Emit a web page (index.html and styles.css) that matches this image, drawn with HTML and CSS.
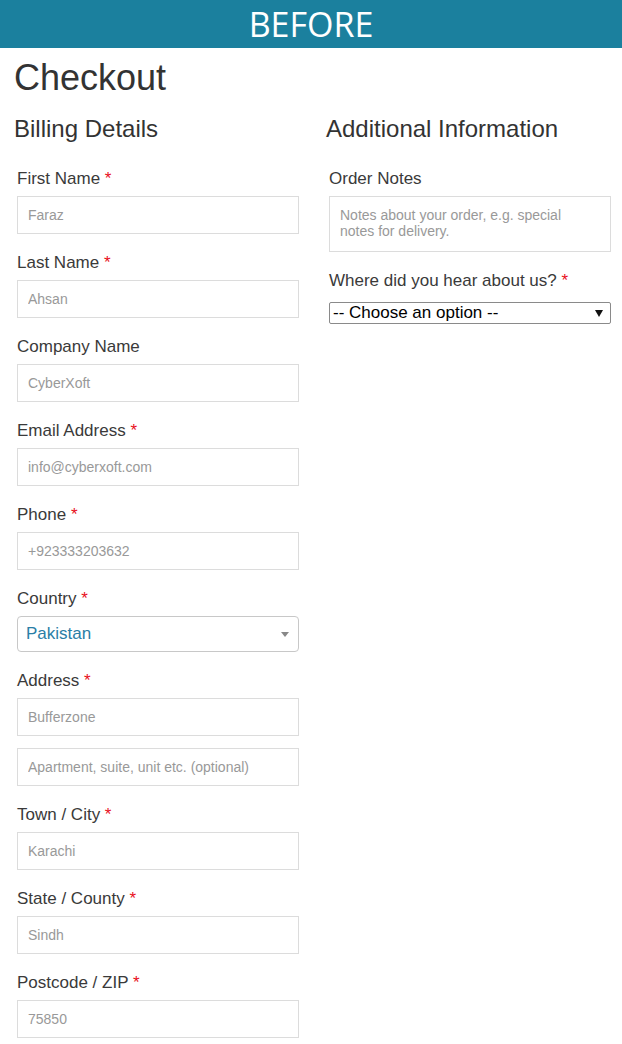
FILE: index.html
```html
<!DOCTYPE html>
<html lang="en">
<head>
    <meta charset="UTF-8">
    <meta name="viewport" content="width=device-width, initial-scale=1.0">
    <title>Checkout - Before</title>
    <link rel="stylesheet" href="styles.css">
</head>
<body>
    <div class="banner">BEFORE</div>

    <div class="page">
        <h1>Checkout</h1>

        <div class="columns">
            <div class="col">
                <h2>Billing Details</h2>

                <div class="field">
                    <label>First Name <abbr class="required">*</abbr></label>
                    <input type="text" placeholder="Faraz">
                </div>
                <div class="field">
                    <label>Last Name <abbr class="required">*</abbr></label>
                    <input type="text" placeholder="Ahsan">
                </div>
                <div class="field">
                    <label>Company Name</label>
                    <input type="text" placeholder="CyberXoft">
                </div>
                <div class="field">
                    <label>Email Address <abbr class="required">*</abbr></label>
                    <input type="email" placeholder="info@cyberxoft.com">
                </div>
                <div class="field">
                    <label>Phone <abbr class="required">*</abbr></label>
                    <input type="tel" placeholder="+923333203632">
                </div>
                <div class="field">
                    <label>Country <abbr class="required">*</abbr></label>
                    <div class="country-select">
                        <span class="country-value">Pakistan</span>
                        <span class="caret"></span>
                    </div>
                </div>
                <div class="field">
                    <label>Address <abbr class="required">*</abbr></label>
                    <input type="text" placeholder="Bufferzone">
                    <input type="text" class="second" placeholder="Apartment, suite, unit etc. (optional)">
                </div>
                <div class="field">
                    <label>Town / City <abbr class="required">*</abbr></label>
                    <input type="text" placeholder="Karachi">
                </div>
                <div class="field">
                    <label>State / County <abbr class="required">*</abbr></label>
                    <input type="text" placeholder="Sindh">
                </div>
                <div class="field">
                    <label>Postcode / ZIP <abbr class="required">*</abbr></label>
                    <input type="text" placeholder="75850">
                </div>
            </div>

            <div class="col">
                <h2>Additional Information</h2>

                <div class="field">
                    <label>Order Notes</label>
                    <textarea placeholder="Notes about your order, e.g. special notes for delivery."></textarea>
                </div>
                <div class="field">
                    <label>Where did you hear about us? <abbr class="required">*</abbr></label>
                    <div class="native-select">
                        <select>
                            <option>-- Choose an option --</option>
                        </select>
                        <svg class="select-arrow" width="8" height="7" viewBox="0 0 8 7"><path d="M0 0H8L4 7Z" fill="#111"/></svg>
                    </div>
                </div>
            </div>
        </div>
    </div>
</body>
</html>
```

FILE: styles.css
```css
body {
    margin: 0;
    font-family: "Liberation Sans", Arial, sans-serif;
    color: #333;
    background: #fff;
}
.banner {
    height: 48px;
    line-height: 48px;
    background: #1b809e;
    color: #fff;
    text-align: center;
    font-family: "Open Sans", sans-serif;
    font-size: 34px;
}
.page {
    padding: 0 9px 0 14px;
}
h1 {
    margin: 10px 0 0;
    font-size: 36px;
    line-height: 40px;
    font-weight: normal;
}
.columns {
    display: grid;
    grid-template-columns: 287px 287px;
    column-gap: 25px;
}
h2 {
    margin: 18px 0 24px;
    font-size: 24px;
    line-height: 26px;
    font-weight: normal;
}
.field {
    margin: 0 2px 16px 3px;
}
label {
    display: block;
    font-size: 17px;
    line-height: 24px;
    padding-top: 1px;
    margin-bottom: 5px;
    color: #3a3a3a;
}
.required {
    color: #e8101c;
    text-decoration: none;
    border: none;
}
input, textarea {
    display: block;
    box-sizing: border-box;
    width: 100%;
    height: 38px;
    margin: 0;
    padding: 10px;
    border: 1px solid #dcdcdc;
    border-radius: 0;
    font-family: "Liberation Sans", Arial, sans-serif;
    font-size: 14px;
    line-height: 16px;
    color: #555;
    background: #fff;
}
input::placeholder, textarea::placeholder {
    color: #999;
    opacity: 1;
}
input.second {
    margin-top: 12px;
}
textarea {
    height: 56px;
    padding-right: 30px;
    resize: none;
    overflow: hidden;
}
.country-select {
    box-sizing: border-box;
    height: 36px;
    display: flex;
    align-items: center;
    justify-content: space-between;
    padding: 0 9px 0 8px;
    border: 1px solid #c8c8c8;
    border-radius: 4px;
}
.country-value {
    font-size: 17px;
    color: #2a7ea6;
}
.caret {
    width: 0;
    height: 0;
    border-left: 4px solid transparent;
    border-right: 4px solid transparent;
    border-top: 5px solid #888;
}
.native-select {
    position: relative;
    margin-top: 9px;
}
select {
    display: block;
    box-sizing: border-box;
    width: 100%;
    height: 22px;
    margin: 0;
    padding: 0 3px;
    border: 1px solid #8a8a8a;
    border-radius: 2px;
    background: #fff;
    font-family: "Liberation Sans", Arial, sans-serif;
    font-size: 17px;
    line-height: 20px;
    color: #000;
    appearance: none;
    -webkit-appearance: none;
}
.select-arrow {
    position: absolute;
    right: 8px;
    top: 8px;
    pointer-events: none;
}
```
